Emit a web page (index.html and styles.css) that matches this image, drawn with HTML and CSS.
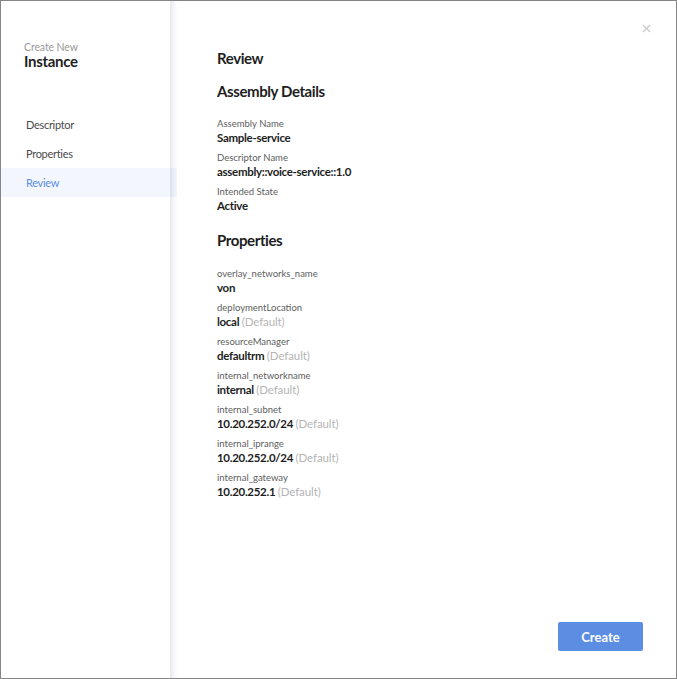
FILE: index.html
```html
<!DOCTYPE html>
<html>
<head>
<meta charset="utf-8">
<link rel="stylesheet" href="styles.css">
</head>
<body>
<div class="window">
  <aside class="sidebar">
    <div class="title">
      <div class="title-sub">Create New</div>
      <div class="title-main">Instance</div>
    </div>
    <nav class="nav">
      <div class="nav-item">Descriptor</div>
      <div class="nav-item">Properties</div>
      <div class="nav-item active">Review</div>
    </nav>
  </aside>
  <main class="main">
    <button class="close" aria-label="Close">
      <svg width="9" height="9" viewBox="0 0 9 9"><path d="M1 1L8 8M8 1L1 8" stroke="#c9c9c9" stroke-width="1.3" fill="none"/></svg>
    </button>
    <div class="content">
      <h1 class="page-title">Review</h1>
      <h2 class="section-title">Assembly Details</h2>
      <div class="fields">
        <div class="field"><div class="label">Assembly Name</div><div class="value">Sample-service</div></div>
        <div class="field"><div class="label">Descriptor Name</div><div class="value">assembly::voice-service::1.0</div></div>
        <div class="field"><div class="label">Intended State</div><div class="value">Active</div></div>
      </div>
      <h2 class="section-title props">Properties</h2>
      <div class="fields">
        <div class="field"><div class="label">overlay_networks_name</div><div class="value">von</div></div>
        <div class="field"><div class="label">deploymentLocation</div><div class="value">local <span class="default">(Default)</span></div></div>
        <div class="field"><div class="label">resourceManager</div><div class="value">defaultrm <span class="default">(Default)</span></div></div>
        <div class="field"><div class="label">internal_networkname</div><div class="value">internal <span class="default">(Default)</span></div></div>
        <div class="field"><div class="label">internal_subnet</div><div class="value">10.20.252.0/24 <span class="default">(Default)</span></div></div>
        <div class="field"><div class="label">internal_iprange</div><div class="value">10.20.252.0/24 <span class="default">(Default)</span></div></div>
        <div class="field"><div class="label">internal_gateway</div><div class="value">10.20.252.1 <span class="default">(Default)</span></div></div>
      </div>
    </div>
    <div class="footer">
      <button class="btn-primary">Create</button>
    </div>
  </main>
</div>
</body>
</html>
```

FILE: styles.css
```css
* { box-sizing: border-box; }
html, body { margin: 0; padding: 0; background: #fff; }
body { font-family: Lato, "Open Sans", sans-serif; color: #222; }

.window {
  width: 677px;
  height: 679px;
  border: 1px solid #858585;
  display: flex;
  background: #fff;
}

.sidebar {
  width: 169px;
  flex: none;
  display: flex;
  flex-direction: column;
  padding-top: 40px;
}

.title { padding-left: 23px; }
.title-sub { font-size: 10.5px; line-height: 12px; color: #9a9a9a; letter-spacing: -0.1px; }
.title-main { font-size: 15px; line-height: 17px; color: #1f1f1f; font-weight: 700; letter-spacing: -0.3px; }

.nav { margin-top: 40px; display: flex; flex-direction: column; }
.nav-item {
  height: 29px;
  line-height: 29px;
  padding-left: 25px;
  font-size: 11px;
  letter-spacing: -0.3px;
  color: #4a4a4a;
}
.nav-item.active {
  color: #5b8fe3;
  background: #f3f7fd;
  margin-right: -7px;
  position: relative;
  z-index: 0;
}

.main {
  flex: 1;
  position: relative;
  display: flex;
  flex-direction: column;
  padding: 47px 33px 27px 47px;
  box-shadow: inset 7px 0 6px -5px rgba(120, 130, 170, 0.25);
}

.close {
  position: absolute;
  top: 23px;
  right: 25px;
  border: 0;
  background: none;
  padding: 0;
  width: 9px;
  height: 9px;
  display: block;
}
.close svg { display: block; }

.content { display: flex; flex-direction: column; }
.page-title { margin: 0; font-size: 15px; line-height: 20px; font-weight: 700; color: #1e1e1e; letter-spacing: -0.4px; }
.section-title { margin: 13px 0 0; font-size: 15px; line-height: 20px; font-weight: 700; color: #1e1e1e; letter-spacing: -0.4px; }
.section-title.props { margin-top: 16px; }

.fields { display: flex; flex-direction: column; gap: 6px; margin-top: 17px; }
.section-title.props + .fields { margin-top: 18px; }
.label { font-size: 9.5px; line-height: 12px; color: #5e5e5e; }
.value { font-size: 11.5px; line-height: 16px; font-weight: 700; color: #1e1e1e; letter-spacing: -0.3px; }
.default { font-weight: 400; color: #b5b5b5; letter-spacing: -0.1px; }

.footer { margin-top: auto; display: flex; justify-content: flex-end; }
.btn-primary {
  width: 85px;
  height: 29px;
  border: 0;
  border-radius: 2px;
  background: #5b8de2;
  color: #fff;
  font-family: Lato, "Open Sans", sans-serif;
  font-weight: 700;
  font-size: 13px;
}
```
